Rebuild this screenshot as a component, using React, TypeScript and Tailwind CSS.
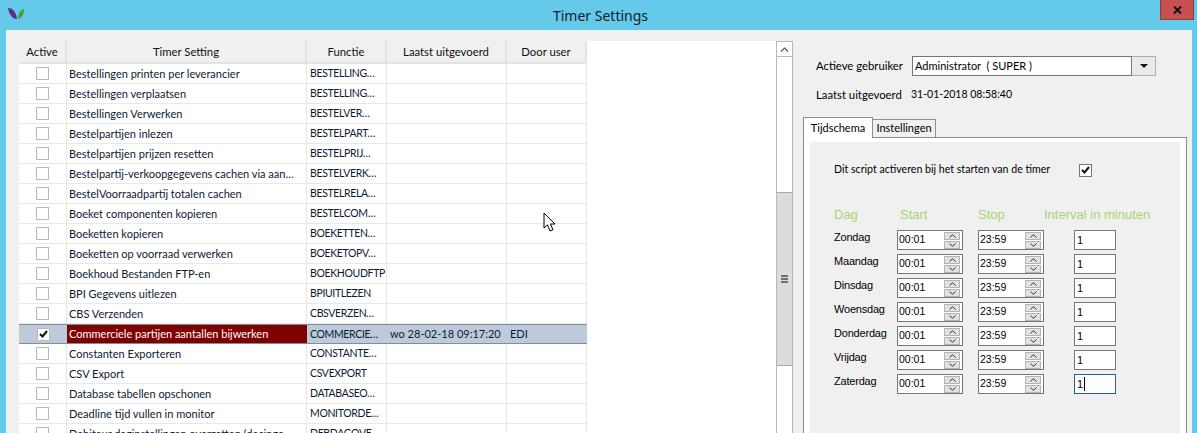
const rows = [
  ["Bestellingen printen per leverancier", "BESTELLING…"],
  ["Bestellingen verplaatsen", "BESTELLING…"],
  ["Bestellingen Verwerken", "BESTELVER…"],
  ["Bestelpartijen inlezen", "BESTELPART…"],
  ["Bestelpartijen prijzen resetten", "BESTELPRIJ…"],
  ["Bestelpartij-verkoopgegevens cachen via aan…", "BESTELVERK…"],
  ["BestelVoorraadpartij totalen cachen", "BESTELRELA…"],
  ["Boeket componenten kopieren", "BESTELCOM…"],
  ["Boeketten kopieren", "BOEKETTEN…"],
  ["Boeketten op voorraad verwerken", "BOEKETOPV…"],
  ["Boekhoud Bestanden FTP-en", "BOEKHOUDFTP"],
  ["BPI Gegevens uitlezen", "BPIUITLEZEN"],
  ["CBS Verzenden", "CBSVERZEN…"],
  ["Commerciele partijen aantallen bijwerken", "COMMERCIE…"],
  ["Constanten Exporteren", "CONSTANTE…"],
  ["CSV Export", "CSVEXPORT"],
  ["Database tabellen opschonen", "DATABASEO…"],
  ["Deadline tijd vullen in monitor", "MONITORDE…"],
  ["Debiteur daginstellingen overzetten (decinge…", "DEBDAGOVE…"],
];

const days = ["Zondag", "Maandag", "Dinsdag", "Woensdag", "Donderdag", "Vrijdag", "Zaterdag"];

function Spinner({ value }: { value: string }) {
  return (
    <div className="flex h-5 w-[66px] items-center border border-[#767676] bg-white pl-[1px] pr-[2px] font-['Liberation_Sans',sans-serif] text-[10.5px] text-black">
      <span className="flex-1">{value}</span>
      <div className="flex w-4 flex-col gap-[1px]">
        <div className="flex h-2 items-center justify-center bg-[#e1e1e1] border border-[#b5b5b5]">
          <svg width="7" height="4" viewBox="0 0 7 4" fill="none" stroke="#333" strokeWidth="1"><path d="M0.5 3.5 3.5 0.7 6.5 3.5" /></svg>
        </div>
        <div className="flex h-2 items-center justify-center bg-[#e1e1e1] border border-[#b5b5b5]">
          <svg width="7" height="4" viewBox="0 0 7 4" fill="none" stroke="#333" strokeWidth="1"><path d="M0.5 0.5 3.5 3.3 6.5 0.5" /></svg>
        </div>
      </div>
    </div>
  );
}

export default function App() {
  return (
    <div className="relative flex h-[433px] w-[1197px] flex-col overflow-hidden bg-[#65c9ea] font-['Lato',sans-serif] text-[11px] text-black">
      {/* title bar */}
      <div className="relative flex h-[30px] shrink-0 items-center justify-center pt-[1px] pl-[4px] font-['Noto_Sans',sans-serif] text-[14px] text-[#10202a]">
        <svg className="absolute left-[8px] top-[8px]" width="17" height="12" viewBox="0 0 17 12">
          <path d="M0 0C4 0 8 3 9 11 4 11 1 6 0 0Z" fill="#5a2d91" />
          <path d="M16 1C12 2 10 6 10 11 14 10 16 6 16 1Z" fill="#4d9a3a" />
        </svg>
        Timer Settings
        <div className="absolute right-[3px] top-0 flex h-[20px] w-[34px] items-center justify-center border border-t-0 border-[#8a3f38] bg-[#c75050]">
          <svg width="9" height="8" viewBox="0 0 9 8" fill="none" stroke="#111" strokeWidth="2"><path d="M1 0.5 8 7.5M8 0.5 1 7.5" /></svg>
        </div>
      </div>

      {/* window body */}
      <div className="ml-[6px] mr-[5px] flex min-h-0 flex-1 bg-[#f0f0f0]">
        {/* grid side */}
        <div className="flex w-[787px] shrink-0 pl-[13px] pt-[11px]">
          <div className="min-w-0 flex-1 overflow-hidden bg-white">
            <div className="flex h-[23px] w-[568px] border-b-2 border-[#e3e3e3] bg-[#f0f0f0] text-center text-[11.3px] leading-[22px] text-[#111]">
              <div className="w-[48px] border-r-2 border-[#e3e3e3]">Active</div>
              <div className="w-[240px] border-r-2 border-[#e3e3e3]">Timer Setting</div>
              <div className="w-[80px] border-r-2 border-[#e3e3e3]">Functie</div>
              <div className="w-[120px] border-r-2 border-[#e3e3e3]">Laatst uitgevoerd</div>
              <div className="w-[80px] border-r-2 border-[#e3e3e3]">Door user</div>
            </div>
            {rows.map(([name, code], i) => {
              const selected = i === 13;
              return (
                <div
                  key={name}
                  className={
                    selected
                      ? "flex h-5 w-[568px] border-y border-[#7d8ea3] bg-[#bccad9] leading-[18px] text-[#0b1a33]"
                      : "flex h-5 w-[568px] border-b border-[#e8e8e8] leading-[19px] text-[#0b1a33]"
                  }
                >
                  <div className={selected ? "flex w-[48px] items-center justify-center" : "flex w-[48px] items-center justify-center border-r border-[#e8e8e8]"}>
                    <div className="flex h-[13px] w-[13px] items-center justify-center border border-[#b8b8b8] bg-white">
                      {selected && (
                        <svg width="9" height="8" viewBox="0 0 9 8" fill="none" stroke="#111" strokeWidth="2"><path d="M1 4 3.5 6.5 8 1" /></svg>
                      )}
                    </div>
                  </div>
                  <div className={selected ? "w-[240px] overflow-hidden whitespace-nowrap bg-[#800000] pl-[2px] text-white" : "w-[240px] overflow-hidden whitespace-nowrap border-r border-[#e8e8e8] pl-[2px]"}>{name}</div>
                  <div className={selected ? "w-[80px] overflow-hidden whitespace-nowrap pl-[3px] text-[10.5px] tracking-[-0.35px]" : "w-[80px] overflow-hidden whitespace-nowrap border-r border-[#e8e8e8] pl-[3px] text-[10.5px] tracking-[-0.35px]"}>{code}</div>
                  <div className={selected ? "w-[120px] whitespace-nowrap pl-[3px]" : "w-[120px] border-r border-[#e8e8e8] pl-[3px]"}>{selected ? "wo 28-02-18 09:17:20" : ""}</div>
                  <div className={selected ? "w-[80px] pl-[3px]" : "w-[80px] border-r border-[#e8e8e8] pl-[3px]"}>{selected ? "EDI" : ""}</div>
                </div>
              );
            })}
          </div>
          {/* scrollbar */}
          <div className="flex w-[17px] shrink-0 flex-col border-x border-[#b8b8b8] bg-white">
            <div className="flex h-4 items-center justify-center border-y border-[#b8b8b8] bg-white">
              <svg width="9" height="5" viewBox="0 0 9 5" fill="none" stroke="#555" strokeWidth="1.2"><path d="M1 4.5 4.5 1 8 4.5" /></svg>
            </div>
            <div className="h-[135px]" />
            <div className="flex h-[174px] flex-col items-center justify-center gap-[1px] border-y border-[#a8a8a8] bg-[#dcdcdc]">
              <div className="h-[2px] w-[7px] bg-[#6e6e6e]" />
              <div className="h-[2px] w-[7px] bg-[#6e6e6e]" />
              <div className="h-[2px] w-[7px] bg-[#6e6e6e]" />
            </div>
          </div>
        </div>

        {/* settings side */}
        <div className="flex min-w-0 flex-1 flex-col pl-[10px] pr-[5px]">
          <div className="mt-[26px] flex h-[20px] items-center pl-[13px] text-[11.3px]">
            <span className="w-[96px]">Actieve gebruiker</span>
            <div className="flex h-5 w-[220px] items-center border border-[#767676] bg-white pl-[2px] text-[11px]">Administrator&nbsp; ( SUPER )</div>
            <div className="flex h-5 w-[24px] items-center justify-center border border-l-0 border-[#adadad] bg-[#e9e9e9]">
              <svg width="8" height="4" viewBox="0 0 8 4"><path d="M0 0H8L4 4Z" fill="#111" /></svg>
            </div>
          </div>
          <div className="mt-[9px] flex h-[20px] items-center pl-[13px] text-[11.3px]">
            <span className="w-[95px]">Laatst uitgevoerd</span>
            <span className="text-[10.5px]">31-01-2018 08:58:40</span>
          </div>
          <div className="mt-[12px] flex h-[20px] items-end">
            <div className="relative z-10 -mb-[1px] flex h-[21px] w-[70px] items-center justify-center border border-b-0 border-[#8e8e8e] bg-white">Tijdschema</div>
            <div className="flex h-[18px] w-[63px] items-center justify-center border border-b-0 border-l-0 border-[#8e8e8e] bg-[#f0f0f0]">Instellingen</div>
          </div>
          <div className="flex-1 border border-b-0 border-[#8e8e8e] bg-white px-[6px] pt-[4px]">
            <div className="h-full bg-[#f0f0f0] pl-[24px] pt-[21px]">
              <div className="flex h-[14px] items-center">
                <span className="w-[245px] text-[10.6px]">Dit script activeren bij het starten van de timer</span>
                <div className="flex h-[13px] w-[13px] items-center justify-center border border-[#767676] bg-white">
                  <svg width="9" height="8" viewBox="0 0 9 8" fill="none" stroke="#111" strokeWidth="2"><path d="M1 4 3.5 6.5 8 1" /></svg>
                </div>
              </div>
              <div className="mt-[29px] flex h-[18px] items-center font-['Liberation_Sans',sans-serif] text-[13px] text-[#a8d46f]">
                <span className="w-[66px]">Dag</span>
                <span className="w-[78px]">Start</span>
                <span className="w-[66px]">Stop</span>
                <span>Interval in minuten</span>
              </div>
              <div className="mt-[6px] flex flex-col gap-1">
                {days.map((day, i) => (
                  <div key={day} className="flex h-5 items-start font-['Liberation_Sans',sans-serif] text-[11px]">
                    <span className="w-[63px] leading-[15px] tracking-[-0.2px]">{day}</span>
                    <Spinner value="00:01" />
                    <div className="w-[15px]" />
                    <Spinner value="23:59" />
                    <div className="w-[30px]" />
                    <div className={i === 6 ? "flex h-5 w-[42px] items-center border border-[#1f5f8f] bg-white pl-[2px]" : "flex h-5 w-[42px] items-center border border-[#767676] bg-white pl-[2px]"}>
                      1{i === 6 && <span className="ml-[1px] h-[14px] w-[1px] bg-black" />}
                    </div>
                  </div>
                ))}
              </div>
            </div>
          </div>
        </div>
      </div>

      {/* mouse cursor */}
      <svg className="absolute left-[543px] top-[212px]" width="16" height="22" viewBox="0 0 16 22">
        <path d="M1 1V16L4.5 12.8 7 19 10 17.8 7.5 12H12Z" fill="#fff" stroke="#000" strokeWidth="1" />
      </svg>
    </div>
  );
}
